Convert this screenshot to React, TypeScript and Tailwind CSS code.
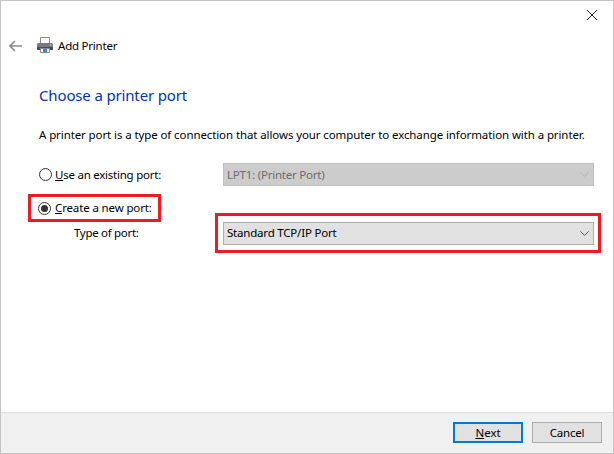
import { ChevronDown } from "lucide-react";

function Radio({ checked }: { checked?: boolean }) {
  return (
    <span className="w-[13px] h-[13px] rounded-full border border-[#333] bg-white flex items-center justify-center flex-shrink-0">
      {checked && <span className="w-[7px] h-[7px] rounded-full bg-[#333]" />}
    </span>
  );
}

function PrinterIcon() {
  return (
    <svg width="16" height="16" viewBox="0 0 16 16" className="block -mt-[2px]">
      <path d="M3.5 0.5h9v6h-9z" fill="#fff" stroke="#8a8a8a" />
      <path d="M0 7.5q0-1.5 1.5-1.5h13q1.5 0 1.5 1.5v5.5h-16z" fill="#777b80" />
      <path d="M0 10h16v3h-16z" fill="#4d5054" />
      <path d="M3.5 11.5h9v4h-9z" fill="#f4f4f4" stroke="#8a8a8a" />
      <path d="M6 12h4v3h-4z" fill="#2f8fc9" />
      <path d="M13 7.5h1.5v1h-1.5z" fill="#d8d8d8" />
    </svg>
  );
}

export default function App() {
  return (
    <div className="w-[614px] h-[454px] flex flex-col bg-white border border-[#c4c4c4] text-[11.5px] text-[#000] font-['Noto_Sans',sans-serif] overflow-hidden">
      <div className="h-[28px] flex justify-end items-start pt-[9px] pr-[16px]">
        <svg width="10" height="10" viewBox="0 0 10 10">
          <path d="M0 0L10 10M10 0L0 10" stroke="#222" strokeWidth="1" />
        </svg>
      </div>

      <div className="h-[33px] flex items-center pl-[8px]">
        <svg width="13" height="12" viewBox="0 0 13 12">
          <path d="M6 1L1 6L6 11M1 6H13" fill="none" stroke="#8a8a8a" strokeWidth="1.6" />
        </svg>
        <span className="ml-[15px]">
          <PrinterIcon />
        </span>
        <span className="ml-[5px] tracking-[-0.22px]">Add Printer</span>
      </div>

      <div className="flex-1 flex flex-col">
        <h1 className="ml-[38px] mt-[22px] text-[15px] leading-[22px] text-[#0033bc] tracking-[-0.15px]">
          Choose a printer port
        </h1>
        <p className="ml-[38px] mt-[20px] leading-[18px] tracking-[-0.1px] whitespace-nowrap">
          A printer port is a type of connection that allows your computer to exchange information with a printer.
        </p>

        <div className="mt-[19px] flex items-center h-[23px]">
          <div className="ml-[38px] w-[184px] flex items-center gap-[3px]">
            <Radio />
            <span className="tracking-[-0.24px]">
              <u>U</u>se an existing port:
            </span>
          </div>
          <div className="w-[371px] h-[23px] bg-[#cccccc] border border-[#bfbfbf] flex items-center justify-between pl-[3px] pr-[1px] text-[#6d6d6d]">
            <span className="tracking-[-0.22px]">LPT1: (Printer Port)</span>
            <ChevronDown size={15} strokeWidth={1} className="text-[#a5a5a5]" />
          </div>
        </div>

        <div className="mt-[8px] ml-[27px] w-[133px] h-[28px] border-[3px] border-[#ed1c24] flex items-center pl-[7px] gap-[4px]">
          <Radio checked />
          <span className="tracking-[-0.14px] whitespace-nowrap">
            <u>C</u>reate a new port:
          </span>
        </div>

        <div className="-mt-[9px] flex items-center">
          <span className="ml-[73px] w-[141px] tracking-[-0.3px]">Type of port:</span>
          <div className="w-[386px] h-[40px] border-[3px] border-[#ed1c24] flex items-center pl-[5px] pr-[4px]">
            <div className="w-full h-[23px] bg-[#e1e1e1] border border-[#adadad] flex items-center justify-between pl-[3px] pr-[1px]">
              <span className="tracking-[-0.2px]">Standard TCP/IP Port</span>
              <ChevronDown size={15} strokeWidth={1.2} className="text-[#333]" />
            </div>
          </div>
        </div>
      </div>

      <div className="h-[41px] bg-[#f0f0f0] border-t border-[#dfdfdf] flex items-start justify-end gap-[9px] pt-[9px] pr-[11px]">
        <button className="w-[70px] h-[21px] bg-[#e1e1e1] border-2 border-[#0078d7] flex items-center justify-center">
          <span>
            <u>N</u>ext
          </span>
        </button>
        <button className="w-[70px] h-[21px] bg-[#e1e1e1] border border-[#adadad] flex items-center justify-center tracking-[-0.2px]">
          Cancel
        </button>
      </div>
    </div>
  );
}
